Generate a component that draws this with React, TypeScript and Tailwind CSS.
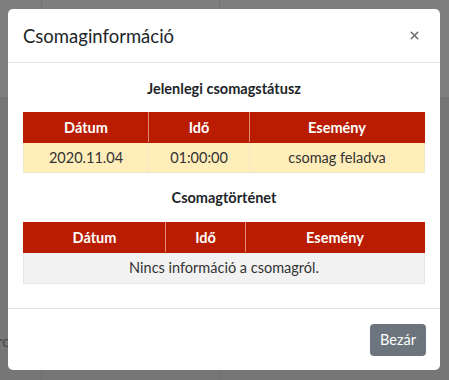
import { X } from "lucide-react";

const current = [{ date: "2020.11.04", time: "01:00:00", event: "csomag feladva" }];

const font = { fontFamily: 'Lato, "Open Sans", "Liberation Sans", sans-serif' };

const HeadRow = ({ widths }: { widths: string[] }) => (
  <tr className="bg-[#b91c00] text-white">
    <th className={`${widths[0]} h-[30px] border border-[#b91c00] border-r-[#e08a7c] font-bold text-[14.5px] text-center`}>Dátum</th>
    <th className={`${widths[1]} h-[30px] border border-[#b91c00] border-r-[#e08a7c] font-bold text-[14.5px] text-center`}>Idő</th>
    <th className={`${widths[2]} h-[30px] border border-[#b91c00] font-bold text-[14.5px] text-center`}>Esemény</th>
  </tr>
);

export default function App() {
  return (
    <div className="relative w-[449px] h-[380px] overflow-hidden bg-[#767676]" style={font}>
      {/* page behind the backdrop */}
      <div className="flex h-[98px] bg-[#7f7f7f] border-b border-[#747474]">
        <div className="w-[42px] border-r border-[#737373]" />
        <div className="w-[178px] border-r border-[#737373]" />
      </div>
      <div className="flex h-[282px]">
        <div className="w-[42px] border-r border-[#6e6e6e] flex items-end pb-[28px]">
          <span className="text-[15px] text-[#4a4a4a] -ml-[3px]">ro</span>
        </div>
        <div className="w-[178px] border-r border-[#6e6e6e]" />
      </div>

      {/* modal */}
      <div className="absolute left-[8px] top-[9px] w-[432px] h-[361px] bg-white rounded-[5px] flex flex-col text-[#212529]">
        <div className="h-[54px] flex items-center justify-between px-[15px] border-b border-[#e5e5e5]">
          <h5 className="text-[18.5px] leading-none pt-[2px]">Csomaginformáció</h5>
          <X className="w-[13px] h-[13px] text-[#6f6f6f] mr-[4px]" strokeWidth={2.8} />
        </div>

        <div className="flex-1 px-[15px] pt-[16px] border-b border-[#e5e5e5]">
          <h6 className="text-[14.5px] font-bold text-center leading-[20px] h-[20px] mb-[13px]">Jelenlegi csomagstátusz</h6>
          <table className="w-full border-collapse text-[14.5px]">
            <thead>
              <HeadRow widths={["w-[125px]", "w-[101px]", ""]} />
            </thead>
            <tbody>
              {current.map((r) => (
                <tr key={r.date} className="bg-[#ffeeba] text-[#333]">
                  <td className="h-[30px] border border-[#f0e6c8] text-center">{r.date}</td>
                  <td className="h-[30px] border border-[#f0e6c8] text-center">{r.time}</td>
                  <td className="h-[30px] border border-[#f0e6c8] text-center">{r.event}</td>
                </tr>
              ))}
            </tbody>
          </table>

          <h6 className="text-[14.5px] font-bold text-center leading-[20px] h-[20px] mt-[15px] mb-[14px]">Csomagtörténet</h6>
          <table className="w-full border-collapse text-[14.5px]">
            <thead>
              <HeadRow widths={["w-[142px]", "w-[80px]", ""]} />
            </thead>
            <tbody>
              <tr className="bg-[#f2f2f2] text-[#333]">
                <td colSpan={3} className="h-[31px] border border-[#e6e6e6] text-center">Nincs információ a csomagról.</td>
              </tr>
            </tbody>
          </table>
        </div>

        <div className="h-[61px] flex items-center justify-end px-[14px]">
          <button className="h-[32px] w-[56px] bg-[#6c757d] text-white text-[14.5px] rounded-[4px]">Bezár</button>
        </div>
      </div>
    </div>
  );
}
